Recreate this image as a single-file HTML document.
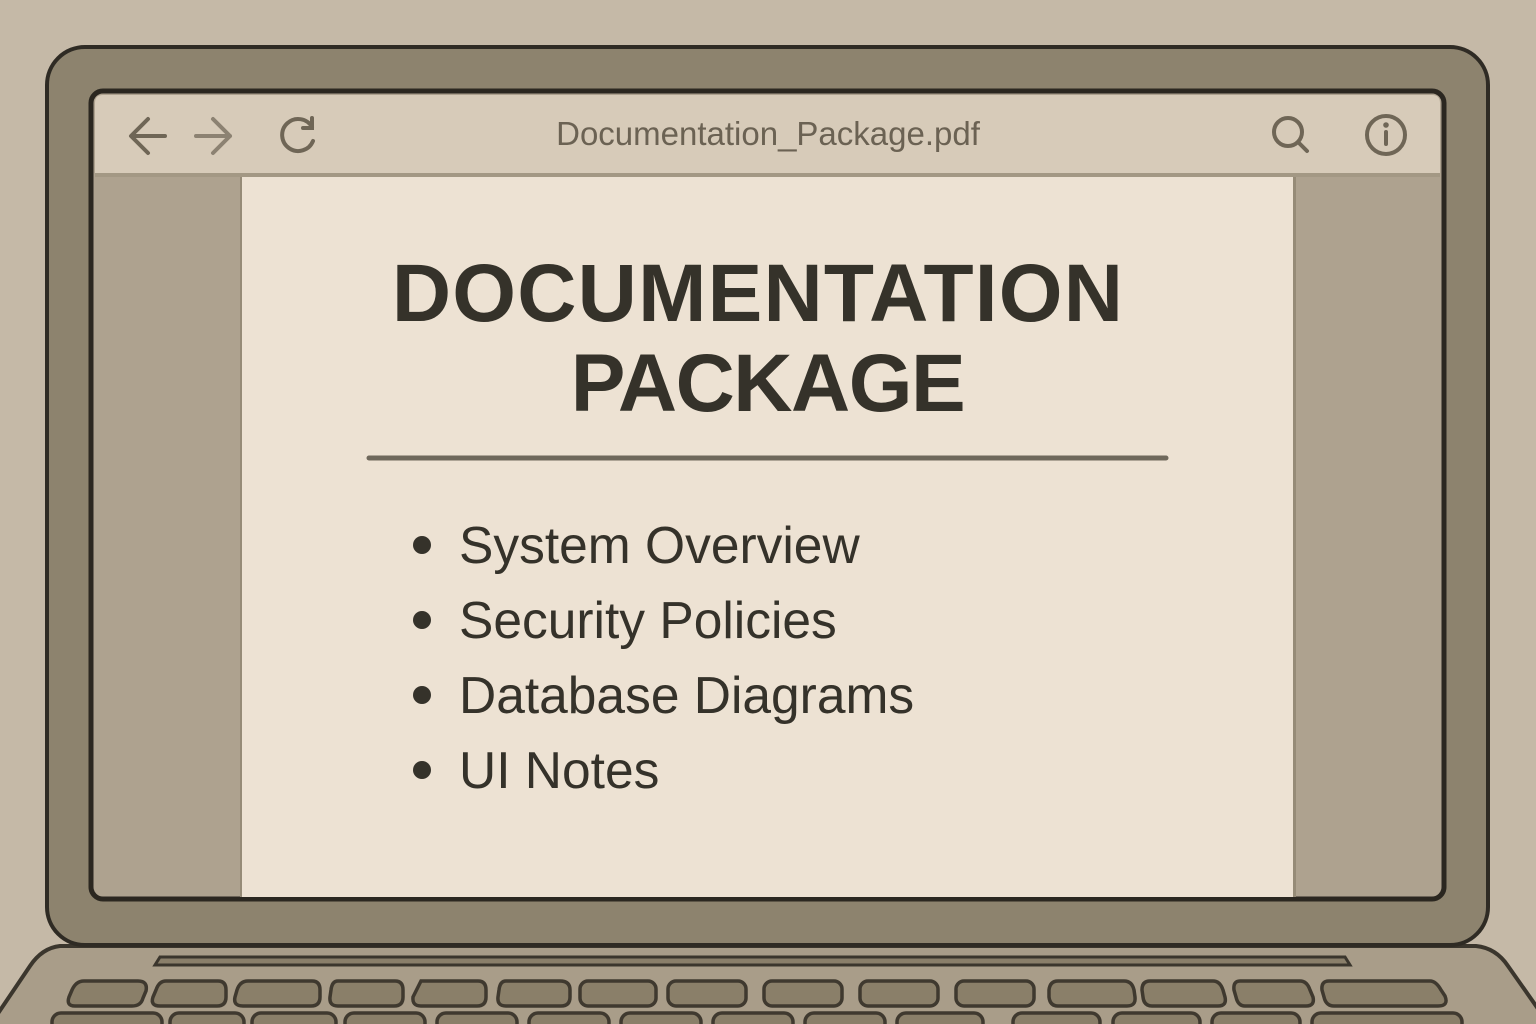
<!DOCTYPE html>
<html><head><meta charset="utf-8"><style>
html,body{margin:0;padding:0}
body{width:1536px;height:1024px;position:relative;overflow:hidden;background:#c5b9a7;font-family:"Liberation Sans",sans-serif}
.abs{position:absolute}
.t{position:absolute;line-height:1;white-space:nowrap;color:#35322a}
</style></head><body>
<svg class="abs" style="left:0;top:0" width="1536" height="1024" viewBox="0 0 1536 1024">
  <path d="M60 946 L1476 946 Q1496 948 1508 966 L1560 1040 L-20 1040 L30 966 Q42 948 60 946 Z" fill="#a99d89" stroke="#3b362d" stroke-width="4"/>
  <path d="M160 957 L1345 957 L1350 965 L155 965 Z" fill="#8a7f6a" stroke="#3b362d" stroke-width="3"/>
  <rect x="47" y="47" width="1441" height="898" rx="38" fill="#8d836e" stroke="#2f2b24" stroke-width="4"/>
  <rect x="91" y="91" width="1353" height="808" rx="12" fill="#aea28f" stroke="#2b2720" stroke-width="5"/>
  <path d="M95 175 V103 Q95 95 103 95 H1432 Q1440 95 1440 103 V175 Z" fill="#d7cbb9"/>
  <rect x="95" y="173" width="1345" height="4" fill="#a39884"/>
  <rect x="240" y="177" width="2" height="720" fill="#968b77"/>
  <rect x="242" y="177" width="1051" height="720" fill="#ede2d3"/>
  <rect x="1293" y="177" width="3" height="720" fill="#968b77"/>
  <g fill="none" stroke="#6f6656" stroke-width="4" stroke-linecap="round" stroke-linejoin="round">
    <path d="M165 136 H132 M148 119 L131 136 L148 153"/>
  </g>
  <g fill="none" stroke="#8c8272" stroke-width="4" stroke-linecap="round" stroke-linejoin="round">
    <path d="M196 136 H230 M213 119 L230 136 L213 153"/>
  </g>
  <g fill="none" stroke="#6f6656" stroke-width="4" stroke-linecap="round">
    <path d="M312 127 A16 16 0 1 0 313 141"/>
    <path d="M312 118 V128 H303"/>
    <circle cx="1288" cy="132" r="14"/>
    <path d="M1298 142 L1307 151"/>
    <circle cx="1386" cy="135" r="19"/>
    <path d="M1386 132 V144"/>
  </g>
  <circle cx="1386" cy="125" r="2.8" fill="#6f6656"/>
  <line x1="369" y1="458" x2="1166" y2="458" stroke="#6f685b" stroke-width="5" stroke-linecap="round"/>
  <g fill="#35322a">
    <circle cx="422" cy="545" r="9"/><circle cx="422" cy="620" r="9"/>
    <circle cx="422" cy="695" r="9"/><circle cx="422" cy="770" r="9"/>
  </g>
  <g fill="#8a7f69" stroke="#3f392f" stroke-width="3.5">
    <path d="M84 981 H138 Q148 981 146 991 L143 998 Q141 1006 132 1006 H75 Q66 1006 69 997 L72 990 Q76 981 84 981Z"/>
    <path d="M166 981 H218 Q226 981 226 990 V997 Q226 1006 217 1006 H160 Q150 1006 153 997 L156 990 Q159 981 166 981Z"/>
    <path d="M248 981 H312 Q320 981 320 990 V997 Q320 1006 311 1006 H243 Q233 1006 235 997 L237 990 Q240 981 248 981Z"/>
    <path d="M338 981 H395 Q403 981 403 990 V997 Q403 1006 394 1006 H338 Q329 1006 330 997 L331 990 Q332 981 338 981Z"/>
    <path d="M421 981 H478 Q486 981 486 990 V997 Q486 1006 477 1006 H421 Q412 1006 413 997 Z"/>
    <path d="M506 981 H560 Q570 981 570 990 V997 Q570 1006 561 1006 H506 Q497 1006 498 997 L499 990 Q500 981 506 981Z"/>
    <rect x="580" y="981" width="76" height="25" rx="8"/>
    <rect x="668" y="981" width="78" height="25" rx="8"/>
    <rect x="764" y="981" width="78" height="25" rx="8"/>
    <rect x="860" y="981" width="78" height="25" rx="8"/>
    <rect x="956" y="981" width="78" height="25" rx="8"/>
    <path d="M1058 981 H1124 Q1132 981 1134 990 L1135 997 Q1136 1006 1127 1006 H1058 Q1050 1006 1049 997 L1049 990 Q1050 981 1058 981Z"/>
    <path d="M1150 981 H1213 Q1220 981 1223 990 L1225 997 Q1227 1006 1218 1006 H1152 Q1144 1006 1143 997 L1142 990 Q1142 981 1150 981Z"/>
    <path d="M1240 981 H1300 Q1307 981 1310 990 L1313 997 Q1315 1006 1306 1006 H1245 Q1238 1006 1236 997 L1234 990 Q1233 981 1240 981Z"/>
    <path d="M1329 981 H1430 Q1436 981 1441 990 L1445 996 Q1449 1006 1438 1006 H1334 Q1326 1006 1324 997 L1322 990 Q1321 981 1329 981Z"/>
    <rect x="52" y="1013" width="110" height="30" rx="9"/>
    <rect x="170" y="1013" width="74" height="30" rx="9"/>
    <rect x="252" y="1013" width="84" height="30" rx="9"/>
    <rect x="345" y="1013" width="80" height="30" rx="9"/>
    <rect x="437" y="1013" width="80" height="30" rx="9"/>
    <rect x="529" y="1013" width="80" height="30" rx="9"/>
    <rect x="621" y="1013" width="80" height="30" rx="9"/>
    <rect x="713" y="1013" width="80" height="30" rx="9"/>
    <rect x="805" y="1013" width="80" height="30" rx="9"/>
    <rect x="897" y="1013" width="86" height="30" rx="9"/>
    <rect x="1013" y="1013" width="87" height="30" rx="9"/>
    <rect x="1113" y="1013" width="87" height="30" rx="9"/>
    <rect x="1212" y="1013" width="88" height="30" rx="9"/>
    <rect x="1312" y="1013" width="150" height="30" rx="9"/>
  </g>
</svg>
<div class="t" style="left:0;width:1536px;text-align:center;top:117px;font-size:33px;color:#6b6253">Documentation_Package.pdf</div>
<div class="t" style="left:232px;width:1051px;text-align:center;top:253px;font-size:82px;font-weight:bold;letter-spacing:1.2px;text-indent:1px">DOCUMENTATION</div>
<div class="t" style="left:242px;width:1051px;text-align:center;top:343px;font-size:82px;font-weight:bold;letter-spacing:-1.5px">PACKAGE</div>
<div class="t" style="left:459px;top:520px;font-size:51.5px">System Overview</div>
<div class="t" style="left:459px;top:595px;font-size:51.5px">Security Policies</div>
<div class="t" style="left:459px;top:670px;font-size:51.5px">Database Diagrams</div>
<div class="t" style="left:459px;top:745px;font-size:51.5px">UI Notes</div>
</body></html>
